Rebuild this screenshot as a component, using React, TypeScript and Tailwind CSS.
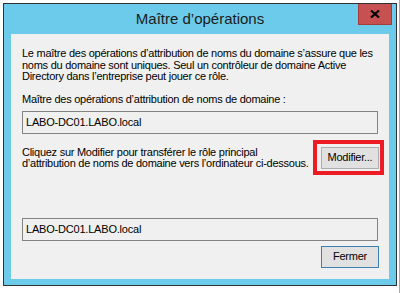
import React from 'react';

const font = { fontFamily: '"Liberation Sans", Arial, sans-serif' };

const ReadOnlyBox = ({ value }: { value: string }) => (
  <div className="h-[23px] border border-[#838383] bg-[#f0f0f0] pl-[3px] flex items-center text-[11px] text-black tracking-[-0.2px]">
    {value}
  </div>
);

export default function App() {
  return (
    <div className="relative w-[402px] h-[293px] overflow-hidden bg-white" style={font}>
      {/* bit of another window behind */}
      <div className="absolute right-[2px] top-0 bottom-0 w-px bg-[#a8a8a8]" />

      <div className="relative ml-[3px] mt-[3px] w-[394px] h-[283px] border border-[#2f3336] bg-[#6ccbea] flex flex-col px-[7px] pb-[6px]">
        {/* Title bar */}
        <div className="h-[30px] flex items-center justify-center text-[15px] text-[#1b1b1b] pt-[1px]">
          Maître d’opérations
        </div>
        <div className="absolute top-0 right-[4px] w-[34px] h-[21px] bg-[#c75050] border border-[#a43c3c] border-t-0 flex items-center justify-center">
          <svg width="10" height="8" viewBox="0 0 10 8">
            <path d="M1 0.5 L9 7.5 M9 0.5 L1 7.5" stroke="#000" strokeWidth="2.2" />
          </svg>
        </div>

        {/* Content */}
        <div className="flex-1 bg-[#f0f0f0] px-[11px] pt-[14px] text-[11px] text-black tracking-[-0.26px] whitespace-nowrap">
          <p className="leading-[11.5px]">
            Le maître des opérations d’attribution de noms du domaine s’assure que les
            <br />
            noms du domaine sont uniques. Seul un contrôleur de domaine Active
            <br />
            Directory dans l’entreprise peut jouer ce rôle.
          </p>
          <p className="mt-[10px] leading-[12px]">Maître des opérations d’attribution de noms de domaine :</p>
          <div className="mt-[6px]">
            <ReadOnlyBox value="LABO-DC01.LABO.local" />
          </div>

          <div className="mt-[6px] flex items-start">
            <p className="mt-[7px] leading-[11.5px]">
              Cliquez sur Modifier pour transférer le rôle principal
              <br />
              d’attribution de noms de domaine vers l’ordinateur ci-dessous.
            </p>
            <div className="ml-auto -mr-[6px] border-4 border-[#ed1c24] pl-[4px] pr-[1px] pt-[3px] pb-[2px]">
              <button className="w-[58px] h-[22px] bg-[#e1e1e1] border border-[#adadad] text-[11px] text-black flex items-center justify-center">
                Modifier...
              </button>
            </div>
          </div>

          <div className="mt-[43px]">
            <ReadOnlyBox value="LABO-DC01.LABO.local" />
          </div>
          <div className="mt-[5px] flex justify-end -mr-px">
            <button className="w-[58px] h-[22px] bg-[#e1e1e1] border border-[#3c7fb1] text-[11px] text-black flex items-center justify-center">
              Fermer
            </button>
          </div>
        </div>
      </div>
    </div>
  );
}
